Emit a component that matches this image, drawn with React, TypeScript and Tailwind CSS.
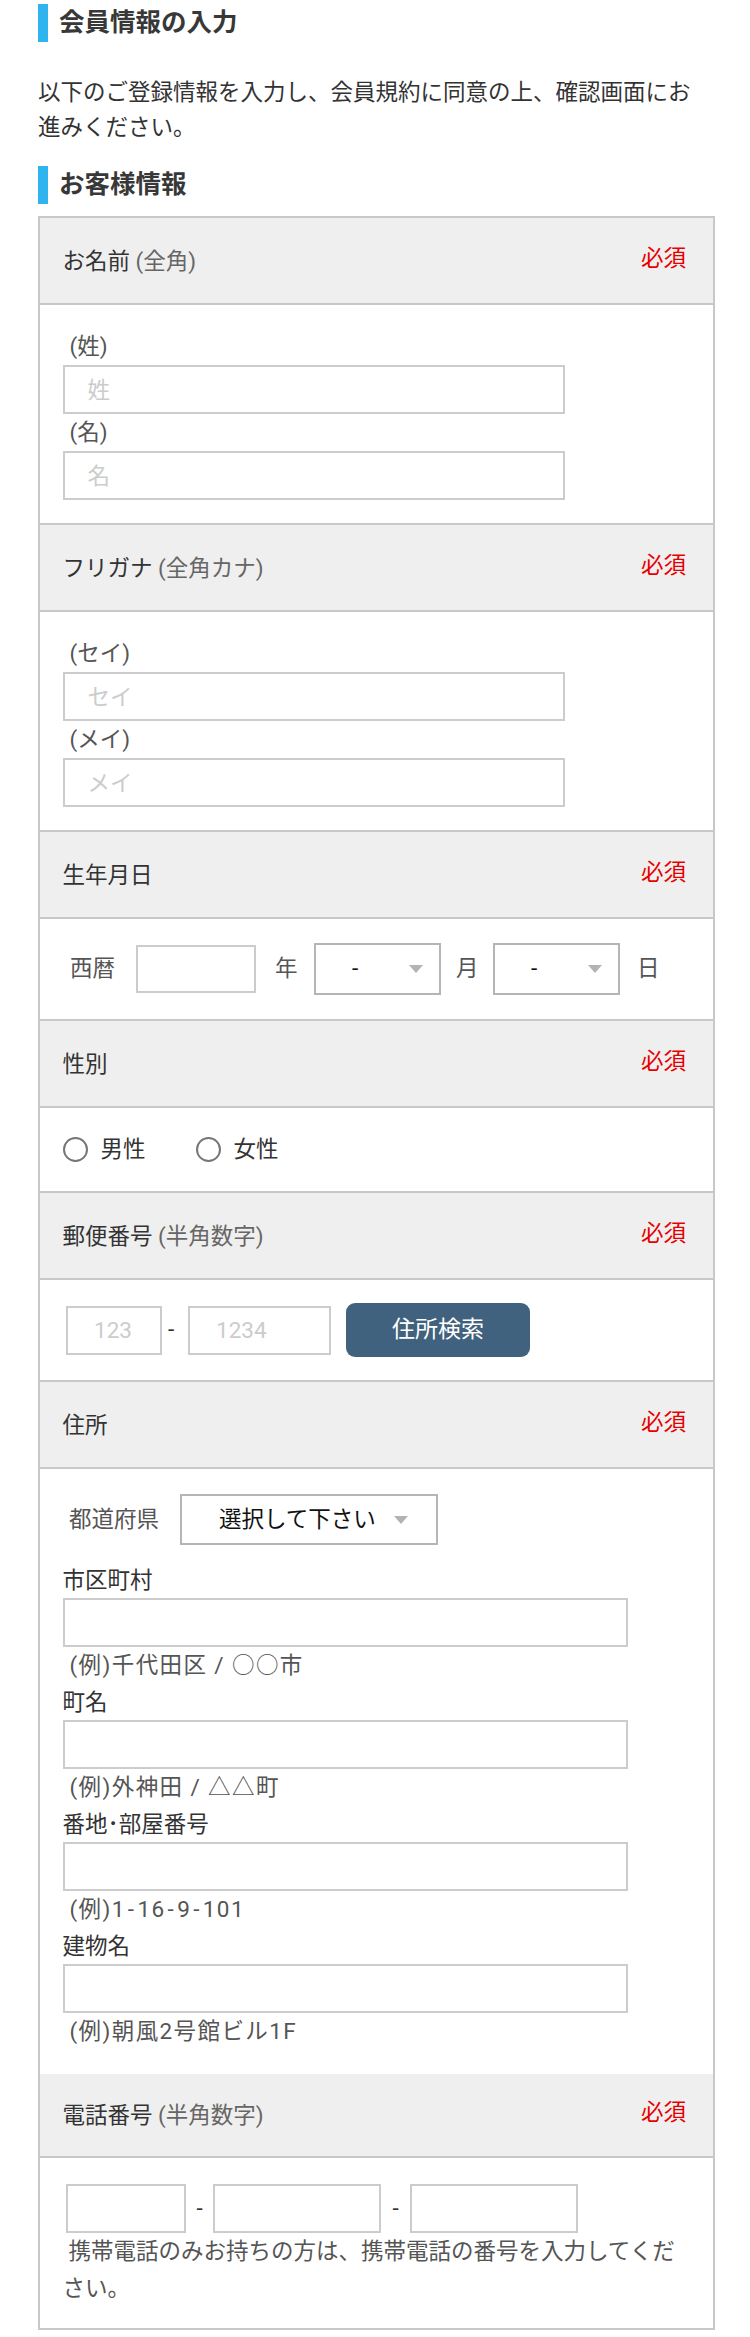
import React from 'react'

const font = { fontFamily: 'Roboto, "Noto Sans CJK JP", sans-serif' }

function Head({ label, note, h = 'h-[87px]' }: { label: string; note?: string; h?: string }) {
  return (
    <div className={`flex ${h} items-center justify-between border-b-2 border-[#c8c8c8] bg-[#efefef] pl-[22.5px] pr-[27px]`}>
      <p className="text-[22.5px] leading-[36px]">
        <span className="text-[#333]">{label}</span>
        {note && <span className="text-[#666]"> ({note})</span>}
      </p>
      <span className="mb-[6px] text-[22.5px] leading-[36px] text-[#e60000]">必須</span>
    </div>
  )
}

function TextBox({ w, placeholder, h = 'h-[49px]', pl = 'pl-[23px]' }: { w: string; placeholder?: string; h?: string; pl?: string }) {
  return (
    <input
      type="text"
      placeholder={placeholder}
      className={`${w} ${h} ${pl} block border-2 border-[#cccccc] bg-white text-[22.5px] text-[#333] outline-none placeholder:text-[#cccccc]`}
    />
  )
}

function Caret() {
  return (
    <svg width="14" height="8" viewBox="0 0 14 8" className="shrink-0">
      <path d="M0 0h14L7 8z" fill="#b3b3b3" />
    </svg>
  )
}

function AddressField({ label, example }: { label: string; example: React.ReactNode }) {
  return (
    <div>
      <p className="text-[22.5px] leading-[36px] text-[#333]">{label}</p>
      <TextBox w="w-[565px]" />
      <p className="pl-[7px] text-[22.5px] leading-[37px] tracking-[1.4px] text-[#555]">{example}</p>
    </div>
  )
}

export default function App() {
  return (
    <div style={font} className="w-[750px] bg-white pb-[7px] pl-[38px] pr-[35px] pt-[4px] text-[#333]">
      {/* page title */}
      <h2 className="flex h-[38px] items-center border-l-[10px] border-[#30b4ef] pl-[11px] text-[25.5px] font-bold leading-none text-[#383838]">
        会員情報の入力
      </h2>
      <p className="mt-[33px] w-[660px] text-[22.5px] leading-[35px] text-[#333]">
        以下のご登録情報を入力し、会員規約に同意の上、確認画面にお進みください。
      </p>

      <h2 className="mt-[21px] flex h-[38px] items-center border-l-[10px] border-[#30b4ef] pl-[11px] text-[25.5px] font-bold leading-none text-[#383838]">
        お客様情報
      </h2>

      <div className="mt-[12px] border-2 border-[#c8c8c8]">
        {/* name */}
        <Head label="お名前" note="全角" />
        <div className="border-b-2 border-[#c8c8c8] py-[23px] pl-[22.5px]">
          <p className="pl-[7px] text-[22.5px] leading-[37px] text-[#555]">(姓)</p>
          <TextBox w="w-[502px]" placeholder="姓" />
          <p className="pl-[7px] text-[22.5px] leading-[37px] text-[#555]">(名)</p>
          <TextBox w="w-[502px]" placeholder="名" />
        </div>

        {/* kana */}
        <Head label="フリガナ" note="全角カナ" />
        <div className="border-b-2 border-[#c8c8c8] py-[23px] pl-[22.5px]">
          <p className="pl-[7px] text-[22.5px] leading-[37px] text-[#555]">(セイ)</p>
          <TextBox w="w-[502px]" placeholder="セイ" />
          <p className="pl-[7px] text-[22.5px] leading-[37px] text-[#555]">(メイ)</p>
          <TextBox w="w-[502px]" placeholder="メイ" />
        </div>

        {/* birthday */}
        <Head label="生年月日" />
        <div className="flex h-[102px] items-center border-b-2 border-[#c8c8c8] pl-[22.5px] text-[22.5px] text-[#555]">
          <span className="ml-[7.5px]">西暦</span>
          <div className="ml-[20.5px]">
            <TextBox w="w-[120px]" h="h-[48px]" />
          </div>
          <span className="ml-[19.5px]">年</span>
          <div className="ml-[16.5px] flex h-[52px] w-[127px] items-center border-2 border-[#b5b5b5] pl-[36px] pr-[16px] text-[#111]">
            <span>-</span>
            <span className="ml-auto"><Caret /></span>
          </div>
          <span className="ml-[15px]">月</span>
          <div className="ml-[14.5px] flex h-[52px] w-[127px] items-center border-2 border-[#b5b5b5] pl-[36px] pr-[16px] text-[#111]">
            <span>-</span>
            <span className="ml-auto"><Caret /></span>
          </div>
          <span className="ml-[17px]">日</span>
        </div>

        {/* gender */}
        <Head label="性別" />
        <div className="flex h-[85px] items-center border-b-2 border-[#c8c8c8] pl-[22.5px] text-[22.5px] text-[#333]">
          <span className="h-[25px] w-[25px] rounded-full border-2 border-[#777]" />
          <span className="ml-[13px]">男性</span>
          <span className="ml-[50px] h-[25px] w-[25px] rounded-full border-2 border-[#777]" />
          <span className="ml-[13px]">女性</span>
        </div>

        {/* postal code */}
        <Head label="郵便番号" note="半角数字" />
        <div className="flex h-[102px] items-center border-b-2 border-[#c8c8c8] pl-[22.5px] text-[22.5px]">
          <div className="ml-[3.5px]">
            <TextBox w="w-[96px]" placeholder="123" pl="pl-[26px]" />
          </div>
          <span className="w-[26px] pl-[6px] text-[#333]">-</span>
          <TextBox w="w-[143px]" placeholder="1234" pl="pl-[26px]" />
          <button className="ml-[15px] h-[54px] w-[184px] rounded-[9px] bg-[#41627e] text-[23px] text-white">
            住所検索
          </button>
        </div>

        {/* address */}
        <Head label="住所" />
        <div className="pb-[24px] pl-[22.5px] pt-[25px]">
          <div className="flex items-center text-[22.5px]">
            <span className="ml-[6.5px] text-[#555]">都道府県</span>
            <div className="ml-[21px] flex h-[51px] w-[258px] items-center border-2 border-[#b5b5b5] pl-[37px] text-[#111]">
              <span>選択して下さい</span>
              <span className="ml-[18px]"><Caret /></span>
            </div>
          </div>
          <div className="mt-[17px]">
            <AddressField label="市区町村" example="(例)千代田区 / ○○市" />
            <AddressField label="町名" example="(例)外神田 / △△町" />
            <AddressField
              label="番地･部屋番号"
              example={
                <>
                  (例)1<span className="px-[2px]">-</span>16<span className="px-[2px]">-</span>9<span className="px-[2px]">-</span>101
                </>
              }
            />
            <AddressField label="建物名" example="(例)朝風2号館ビル1F" />
          </div>
        </div>

        {/* phone */}
        <Head label="電話番号" note="半角数字" h="h-[84px]" />
        <div className="pb-[21px] pl-[22.5px] pr-[22.5px] pt-[26px] text-[22.5px]">
          <div className="flex items-center">
            <div className="ml-[3.5px]">
              <TextBox w="w-[120px]" />
            </div>
            <span className="w-[27px] text-center text-[#333]">-</span>
            <TextBox w="w-[168px]" />
            <span className="w-[29px] text-center text-[#333]">-</span>
            <TextBox w="w-[168px]" />
          </div>
          <p className="indent-[6px] leading-[37px] text-[#555]">
            携帯電話のみお持ちの方は、携帯電話の番号を入力してください。
          </p>
        </div>
      </div>
    </div>
  )
}
